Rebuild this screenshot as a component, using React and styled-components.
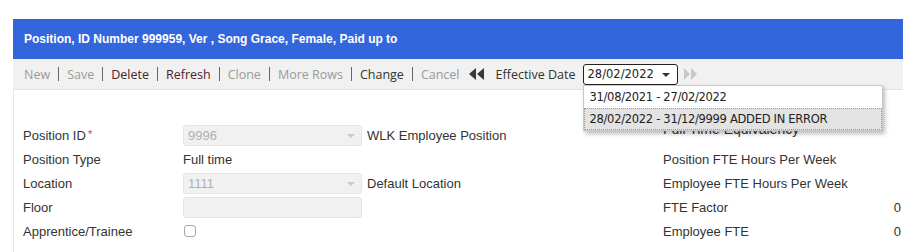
import React from "react";
import styled, { createGlobalStyle } from "styled-components";

const GlobalStyle = createGlobalStyle`
  html, body { margin: 0; padding: 0; background: #ffffff; }
  body { font-family: "Liberation Sans", Arial, sans-serif; color: #333; }
  * { box-sizing: border-box; }
`;

const Page = styled.div`
  padding: 19px 10px 0 13px;
`;

const Panel = styled.div`
  width: 890px;
`;

const Header = styled.div`
  height: 40px;
  background: #3366dd;
  color: #ffffff;
  display: flex;
  align-items: center;
  padding-left: 11px;
  font-family: "Liberation Sans", Arial, sans-serif;
  font-weight: bold;
  font-size: 12px;
`;

const Toolbar = styled.div`
  height: 31px;
  background: #f0f1f0;
  border-bottom: 1px solid #e3e5e3;
  display: flex;
  align-items: center;
  padding-left: 11px;
  font-family: "Open Sans", sans-serif;
  font-size: 12.5px;
`;

const toneColor = {
  disabled: "#9a9a9a",
  link: "#4f2030",
  normal: "#333333",
};

const ToolItem = styled.span`
  color: ${(p) => toneColor[p.$tone]};
  white-space: nowrap;
`;

const Sep = styled.span`
  width: 1px;
  height: 14px;
  background: #666;
  margin: 0 8px;
`;

const NavButton = styled.span`
  display: inline-flex;
  align-items: center;
  margin: ${(p) => p.$margin};
`;

const FieldLabel = styled.span`
  color: #333;
  margin-right: 7px;
`;

const DateSelect = styled.div`
  position: relative;
  width: 95px;
  height: 21px;
  border: 1px solid #222;
  border-radius: 3px;
  background: #fff;
  display: flex;
  align-items: center;
  padding-left: 4px;
  font-family: "DejaVu Sans", Verdana, sans-serif;
  font-size: 11.5px;
  color: #222;
`;

const Caret = styled.span`
  position: absolute;
  right: 7px;
  top: 8px;
  width: 0;
  height: 0;
  border-left: 4px solid transparent;
  border-right: 4px solid transparent;
  border-top: 4px solid #333;
`;

const Dropdown = styled.div`
  position: absolute;
  left: -1px;
  top: 20px;
  width: 300px;
  background: #fff;
  border: 1px solid #c8c8c8;
  box-shadow: 2px 3px 4px rgba(0, 0, 0, 0.25);
  z-index: 5;
`;

const Option = styled.div`
  height: 22px;
  display: flex;
  align-items: center;
  padding-left: 5px;
  font-family: "DejaVu Sans", Verdana, sans-serif;
  font-size: 11.5px;
  letter-spacing: -0.3px;
  color: #222;
  background: ${(p) => (p.$selected ? "#e3e3e3" : "#fff")};
  border: 1px ${(p) => (p.$selected ? "dotted #999" : "solid transparent")};
`;

const Content = styled.div`
  border-left: 1px solid #e6e6e6;
  padding: 33px 0 10px 9px;
  display: flex;
`;

const LeftCol = styled.div`
  width: 640px;
`;

const RightCol = styled.div`
  width: 240px;
`;

const Row = styled.div`
  height: 24px;
  display: flex;
  align-items: center;
  font-size: 13px;
  color: #333;
`;

const Label = styled.div`
  width: ${(p) => p.$width || "160px"};
  flex-shrink: 0;
`;

const Required = styled.span`
  color: #e03030;
  margin-left: 2px;
  font-size: 11px;
  vertical-align: top;
`;

const InputBox = styled.div`
  position: relative;
  width: 179px;
  height: 21px;
  background: #f0f1f0;
  border: 1px solid #e4e5e4;
  border-radius: 3px;
  display: flex;
  align-items: center;
  padding-left: 4px;
  color: #b0b0b0;
  font-size: 13px;
`;

const SmallCaret = styled.span`
  position: absolute;
  right: 6px;
  top: 8px;
  border-left: 4px solid transparent;
  border-right: 4px solid transparent;
  border-top: 4px solid #c9c9c9;
`;

const Desc = styled.span`
  margin-left: 5px;
`;

const Checkbox = styled.span`
  width: 12px;
  height: 12px;
  border: 1px solid #a8a8a8;
  border-radius: 3px;
  background: #fff;
  margin-left: 1px;
`;

const Title = styled.div`
  height: 24px;
  line-height: 12px;
  font-size: 14px;
  color: #333;
`;

const Value = styled.span`
  margin-left: auto;
  padding-right: 2px;
`;

const DoubleLeft = ({ color }) => (
  <svg width="16" height="12" viewBox="0 0 16 12">
    <polygon points="7,0 7,12 0,6" fill={color} />
    <polygon points="15,0 15,12 8,6" fill={color} />
  </svg>
);

const DoubleRight = ({ color }) => (
  <svg width="14" height="12" viewBox="0 0 14 12">
    <polygon points="0,0 0,12 6,6" fill={color} />
    <polygon points="7,0 7,12 13,6" fill={color} />
  </svg>
);

const tools = [
  ["New", "disabled"],
  ["Save", "disabled"],
  ["Delete", "link"],
  ["Refresh", "link"],
  ["Clone", "disabled"],
  ["More Rows", "disabled"],
  ["Change", "normal"],
  ["Cancel", "disabled"],
];

export default function App() {
  return (
    <>
      <GlobalStyle />
      <Page>
        <Panel>
          <Header>Position, ID Number 999959, Ver , Song Grace, Female, Paid up to</Header>
          <Toolbar>
            {tools.map(([name, tone], i) => (
              <React.Fragment key={name}>
                {i > 0 && <Sep />}
                <ToolItem $tone={tone}>{name}</ToolItem>
              </React.Fragment>
            ))}
            <NavButton $margin="0 11px 0 9px">
              <DoubleLeft color="#3a3a3a" />
            </NavButton>
            <FieldLabel>Effective Date</FieldLabel>
            <DateSelect>
              28/02/2022
              <Caret />
              <Dropdown>
                <Option>31/08/2021 - 27/02/2022</Option>
                <Option $selected>28/02/2022 - 31/12/9999 ADDED IN ERROR</Option>
              </Dropdown>
            </DateSelect>
            <NavButton $margin="0 0 0 6px">
              <DoubleRight color="#c8c8c8" />
            </NavButton>
          </Toolbar>
          <Content>
            <LeftCol>
              <Row>
                <Label>
                  Position ID<Required>*</Required>
                </Label>
                <InputBox>
                  9996
                  <SmallCaret />
                </InputBox>
                <Desc>WLK Employee Position</Desc>
              </Row>
              <Row>
                <Label>Position Type</Label>
                <span>Full time</span>
              </Row>
              <Row>
                <Label>Location</Label>
                <InputBox>
                  1111
                  <SmallCaret />
                </InputBox>
                <Desc>Default Location</Desc>
              </Row>
              <Row>
                <Label>Floor</Label>
                <InputBox />
              </Row>
              <Row>
                <Label>Apprentice/Trainee</Label>
                <Checkbox />
              </Row>
            </LeftCol>
            <RightCol>
              <Title>Full Time Equivalency</Title>
              <Row>
                <Label $width="200px">Position FTE Hours Per Week</Label>
              </Row>
              <Row>
                <Label $width="200px">Employee FTE Hours Per Week</Label>
              </Row>
              <Row>
                <Label $width="200px">FTE Factor</Label>
                <Value>0</Value>
              </Row>
              <Row>
                <Label $width="200px">Employee FTE</Label>
                <Value>0</Value>
              </Row>
            </RightCol>
          </Content>
        </Panel>
      </Page>
    </>
  );
}
